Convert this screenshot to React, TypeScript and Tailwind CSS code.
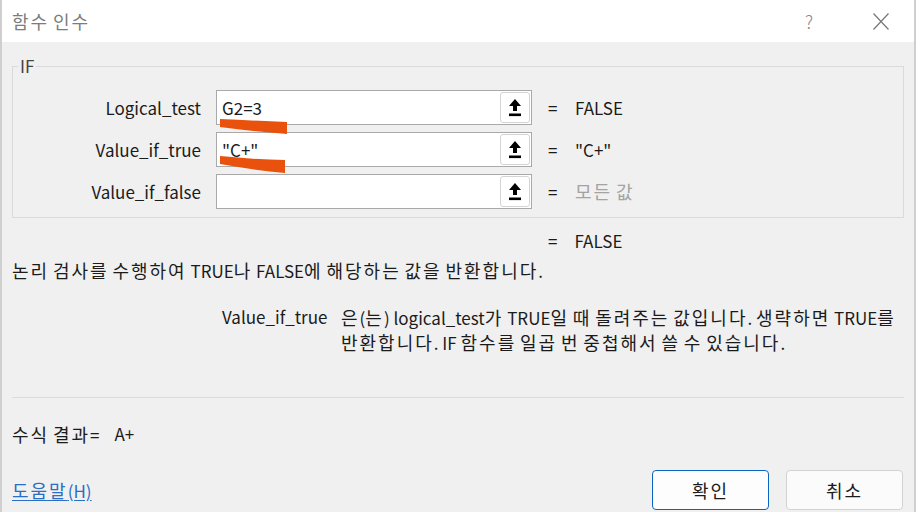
import type { ReactNode } from 'react';

const FONT = { fontFamily: '"Noto Sans CJK KR", "Noto Sans", sans-serif' };

// Malgun Gothic sets hangul wider than Noto CJK does, so hangul runs get a little extra room.
function Ko({ children }: { children: string }) {
  const parts = children.split(/([\uAC00-\uD7A3]+)/);
  return (
    <>
      {parts.map((p, i) =>
        /[\uAC00-\uD7A3]/.test(p) ? (
          <span key={i} className="text-[18px] tracking-[2px]">
            {p}
          </span>
        ) : (
          <span key={i}>{p}</span>
        ),
      )}
    </>
  );
}

function PickIcon() {
  return (
    <svg width="14" height="20" viewBox="0 0 14 20" aria-hidden="true">
      <path d="M7 1 L13 8 L9 8 L9 13 L5 13 L5 8 L1 8 Z" fill="#000" />
      <rect x="1" y="15.5" width="12" height="2.6" fill="#000" />
    </svg>
  );
}

function ArgRow({ label, value, result, muted }: { label: string; value?: string; result: ReactNode; muted?: boolean }) {
  return (
    <div className="flex h-[35px] items-center">
      <div className="w-[188px] text-right">{label}</div>
      <div className="ml-[15px] flex h-[35px] w-[316px] items-center border border-[#a9a9a9] bg-white">
        <div className="flex-1 truncate pl-[5px]">{value}</div>
        <div className="mr-[1px] flex h-[31px] w-[30px] items-center justify-center rounded-[3px] border border-[#d4d4d4] bg-white">
          <PickIcon />
        </div>
      </div>
      <div className="ml-[16px] w-[8px]">=</div>
      <div className={muted ? 'ml-[19px] text-[#a3a3a3]' : 'ml-[19px]'}>{result}</div>
    </div>
  );
}

export default function App() {
  return (
    <div
      className="relative flex h-[512px] w-[916px] flex-col overflow-hidden border-x-2 border-[#cfcfcf] bg-[#f0f0f0] text-[17px] leading-[24px] text-[#1b1b1b]"
      style={FONT}
    >
      {/* title bar */}
      <div className="flex h-[42px] shrink-0 items-center bg-white pl-[10px]">
        <span className="text-[17px] text-[#7c7c7c]">
          <Ko>함수 인수</Ko>
        </span>
        <span className="ml-auto text-[18px] font-light text-[#8a8a8a]">?</span>
        <svg className="ml-[60px] mr-[25px]" width="16" height="17" viewBox="0 0 16 17" aria-hidden="true">
          <path d="M0.5 0.5 L15.5 16.5 M15.5 0.5 L0.5 16.5" stroke="#777" strokeWidth="1.2" fill="none" />
        </svg>
      </div>

      <div className="flex flex-1 flex-col px-[10px]">
        {/* IF group */}
        <div className="relative mt-[24px] h-[152px] border border-[#dadada]">
          <span className="absolute -top-[13px] left-[5px] bg-[#f0f0f0] px-[2px] text-[#444]">IF</span>
          <div className="mt-[23px] flex flex-col gap-[7px]">
            <ArgRow label="Logical_test" value="G2=3" result="FALSE" />
            <ArgRow label="Value_if_true" value={'"C+"'} result={'"C+"'} />
            <ArgRow label="Value_if_false" result={<Ko>모든 값</Ko>} muted />
          </div>
        </div>

        <div className="mt-[11px] pl-[536px]">
          <span>=</span>
          <span className="ml-[17px]">FALSE</span>
        </div>

        <div className="mt-[5px]">
          <Ko>논리 검사를 수행하여 TRUE나 FALSE에 해당하는 값을 반환합니다.</Ko>
        </div>

        <div className="mt-[22px] flex pl-[210px]">
          <div className="w-[105px] shrink-0">Value_if_true</div>
          <div className="ml-[14px]">
            <Ko>은(는) logical_test가 TRUE일 때 돌려주는 값입니다. 생략하면 TRUE를</Ko>
            <br />
            <Ko>반환합니다. IF 함수를 일곱 번 중첩해서 쓸 수 있습니다.</Ko>
          </div>
        </div>

        <div className="mt-[42px] h-[2px] border-t border-[#dcdcdc] border-b-white" />

        <div className="mt-[23px] flex">
          <span>
            <Ko>수식 결과</Ko>=
          </span>
          <span className="ml-[15px]">A+</span>
        </div>

        <div className="mt-[23px] flex items-center">
          <a href="#" className="text-[#2a6fc4] underline underline-offset-2">
            <Ko>도움말</Ko>(H)
          </a>
          <button className="ml-auto h-[40px] w-[117px] rounded-[4px] border border-[#0a65c2] bg-[#fdfdfd]">
            <Ko>확인</Ko>
          </button>
          <button className="ml-[17px] mr-[1px] h-[40px] w-[117px] rounded-[4px] border border-[#d2d2d2] bg-[#fbfbfb]">
            <Ko>취소</Ko>
          </button>
        </div>
      </div>

      {/* redaction strokes */}
      <svg className="pointer-events-none absolute left-0 top-0" width="916" height="512" aria-hidden="true">
        <path d="M218 119 C240 120 262 121 285 122 L285 134 C262 132 240 130 218 127 Z" fill="#e8520c" />
        <path d="M218 156 C240 158 262 160 283 160 L283 173 C262 171 240 168 218 164 Z" fill="#e8520c" />
      </svg>
    </div>
  );
}
